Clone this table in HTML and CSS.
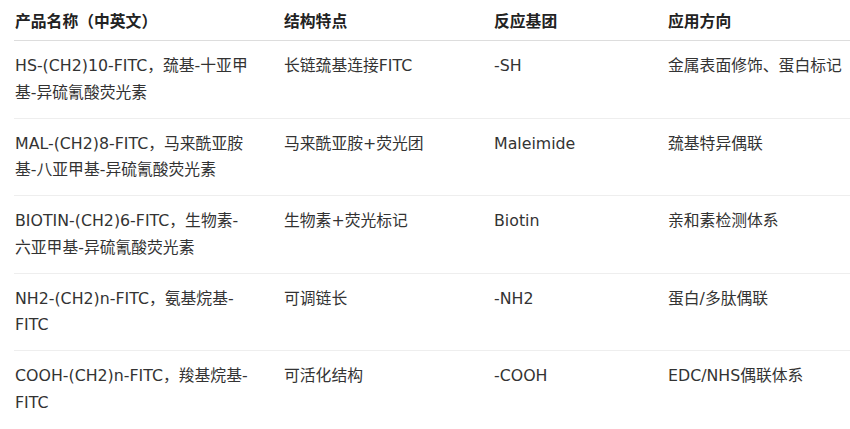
FILE: index.html
```html
<!DOCTYPE html>
<html lang="zh-CN">
<head>
<meta charset="utf-8">
<link rel="stylesheet" href="styles.css">
</head>
<body>
<table class="tbl">
  <colgroup>
    <col class="c1"><col class="c2"><col class="c3"><col class="c4">
  </colgroup>
  <thead>
    <tr><th>产品名称（中英文）</th><th>结构特点</th><th>反应基团</th><th>应用方向</th></tr>
  </thead>
  <tbody>
    <tr><td>HS-(CH2)10-FITC，巯基-十亚甲基-异硫氰酸荧光素</td><td>长链巯基连接FITC</td><td>-SH</td><td>金属表面修饰、蛋白标记</td></tr>
    <tr><td>MAL-(CH2)8-FITC，马来酰亚胺基-八亚甲基-异硫氰酸荧光素</td><td>马来酰亚胺+荧光团</td><td>Maleimide</td><td>巯基特异偶联</td></tr>
    <tr><td>BIOTIN-(CH2)6-FITC，生物素-六亚甲基-异硫氰酸荧光素</td><td>生物素+荧光标记</td><td>Biotin</td><td>亲和素检测体系</td></tr>
    <tr><td>NH2-(CH2)n-FITC，氨基烷基-FITC</td><td>可调链长</td><td>-NH2</td><td>蛋白/多肽偶联</td></tr>
    <tr><td>COOH-(CH2)n-FITC，羧基烷基-FITC</td><td>可活化结构</td><td>-COOH</td><td>EDC/NHS偶联体系</td></tr>
  </tbody>
</table>
</body>
</html>
```
FILE: styles.css
```css
html, body {
  margin: 0;
  padding: 0;
  background: #ffffff;
}
body {
  font-family: "DejaVu Sans", "Noto Sans CJK SC", sans-serif;
  font-size: 15.8px;
  color: #333333;
}
.tbl {
  margin-left: 14px;
  width: 836px;
  border-collapse: collapse;
  table-layout: fixed;
}
.c1 { width: 269px; }
.c2 { width: 210px; }
.c3 { width: 174px; }
.c4 { width: 183px; }
.tbl th,
.tbl td {
  text-align: left;
  vertical-align: top;
  padding: 12px 24px 12px 1px;
  line-height: 26.25px;
}
.tbl th:first-child,
.tbl td:first-child {
  padding-right: 33px;
}
.tbl th:last-child,
.tbl td:last-child {
  padding-right: 0;
}
.tbl th {
  font-weight: 700;
  color: #222222;
  padding-top: 9px;
  padding-bottom: 5px;
  border-bottom: 1px solid #dddddd;
}
.tbl td {
  border-bottom: 1px solid #eeeeee;
}
.tbl tbody tr:last-child td {
  border-bottom: none;
}
```
